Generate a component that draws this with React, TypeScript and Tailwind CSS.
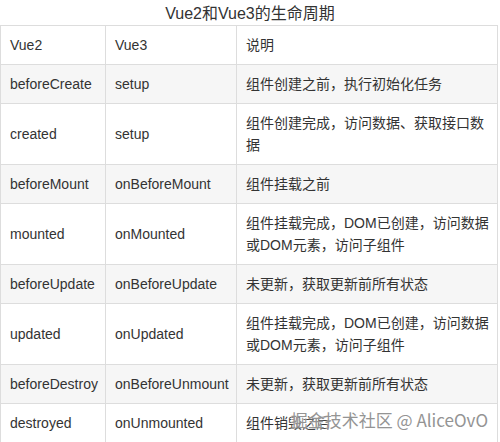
const rows = [
  { v2: "beforeCreate", v3: "setup", note: "组件创建之前，执行初始化任务" },
  { v2: "created", v3: "setup", note: "组件创建完成，访问数据、获取接口数据" },
  { v2: "beforeMount", v3: "onBeforeMount", note: "组件挂载之前" },
  { v2: "mounted", v3: "onMounted", note: "组件挂载完成，DOM已创建，访问数据或DOM元素，访问子组件" },
  { v2: "beforeUpdate", v3: "onBeforeUpdate", note: "未更新，获取更新前所有状态" },
  { v2: "updated", v3: "onUpdated", note: "组件挂载完成，DOM已创建，访问数据或DOM元素，访问子组件" },
  { v2: "beforeDestroy", v3: "onBeforeUnmount", note: "未更新，获取更新前所有状态" },
  { v2: "destroyed", v3: "onUnmounted", note: "组件销毁之后" },
];

const cell = "border border-[#dddddd] py-2 text-left align-middle leading-[22px] font-normal";
const pad = "px-[9px]";
const notePad = "pl-[9px] pr-[3px]";

export default function App() {
  return (
    <div
      className="relative h-[442px] w-[500px] overflow-hidden bg-white text-[14px] text-[#333333]"
      style={{ fontFamily: '"Liberation Sans", Arial, "Noto Sans CJK SC", sans-serif' }}
    >
      <div className="h-[25px] text-center text-[16px] leading-[27px]">Vue2和Vue3的生命周期</div>
      <table className="w-[497px] table-fixed border-collapse">
        <colgroup>
          <col className="w-[105px]" />
          <col className="w-[131px]" />
          <col className="w-[261px]" />
        </colgroup>
        <thead>
          <tr className="bg-white">
            <th className={`${cell} ${pad}`}>Vue2</th>
            <th className={`${cell} ${pad}`}>Vue3</th>
            <th className={`${cell} ${notePad}`}>说明</th>
          </tr>
        </thead>
        <tbody>
          {rows.map((r, i) => (
            <tr key={r.v2} className={i % 2 === 0 ? "bg-[#f6f6f6]" : "bg-white"}>
              <td className={`${cell} ${pad}`}>{r.v2}</td>
              <td className={`${cell} ${pad}`}>{r.v3}</td>
              <td className={`${cell} ${notePad}`}>{r.note}</td>
            </tr>
          ))}
        </tbody>
      </table>
      <div
        className="absolute right-[12px] top-[407px] text-[17px] leading-[26px] text-[#949494]"
        style={{ fontFamily: '"Noto Sans CJK SC", "Noto Sans", sans-serif', textShadow: "0 0 2px #fff" }}
      >
        掘金技术社区 @ AliceOvO
      </div>
    </div>
  );
}
